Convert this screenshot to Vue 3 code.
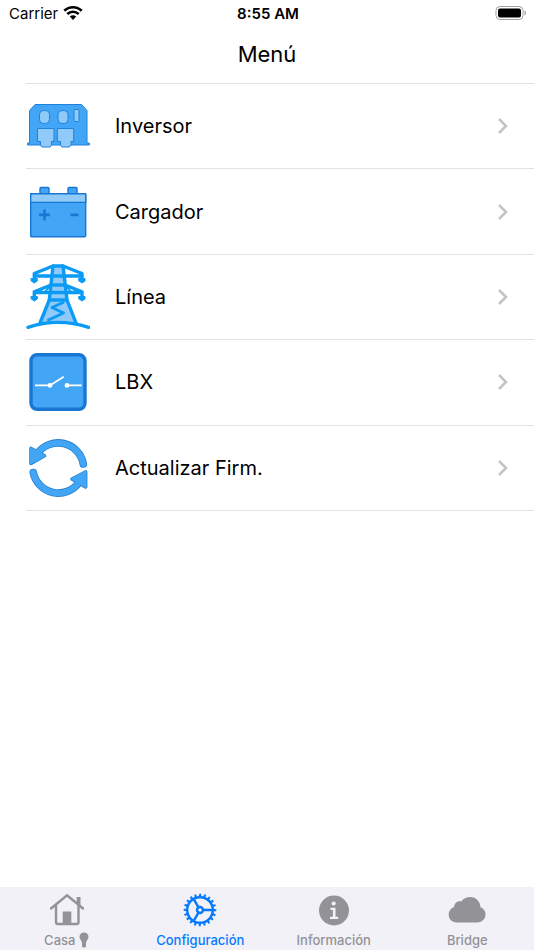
<template>
  <div class="screen">
    <header>
      <div class="status">
        <div class="carrier">
          <span>Carrier</span>
          <svg width="20" height="16" viewBox="0 0 20 16">
            <path d="M1.3 5.8C6.2 1 13.800 1 18.700 5.800" />
            <path d="M4.300 9C7.500 5.900 12.500 5.900 15.700 9" />
            <path class="dot" d="M6.800 11.600C8.600 9.900 11.400 9.900 13.200 11.600L10 14.900Z" />
          </svg>
        </div>
        <span class="time">8:55 AM</span>
        <svg class="battery" width="32" height="16" viewBox="0 0 32 16">
          <rect class="shell" x="1" y="1.500" width="27" height="13" rx="4" />
          <rect x="3" y="3.500" width="23" height="9" rx="2" />
          <path class="tip" d="M29.500 5.500C31.500 6 31.500 10 29.500 10.500Z" />
        </svg>
      </div>
      <h1>Menú</h1>
    </header>

    <main>
      <ul class="menu">
        <li v-for="item in items" :key="item.id">
          <a href="#">
            <svg v-if="item.id === 'inversor'" class="picture" viewBox="0 0 64 70">
              <g class="shape">
                <path d="M3.500 52V19.500L9 13.500H55.500L61 19.500V52H63.300V54H1.500V52Z" />
                <g class="light">
                  <rect x="13.500" y="19.500" width="10" height="13" rx="4" />
                  <rect x="32" y="19.500" width="10" height="13" rx="4" />
                  <rect x="48" y="18.500" width="5" height="12" rx="1" />
                  <path d="M11.500 37.500H28V50.500H25.500V54L24 56H16L14.500 54V50.500H11.500Z" />
                  <path d="M31.300 37.500H47.700V50.500H45V54L43.500 56H36L34.500 54V50.500H31.300Z" />
                </g>
              </g>
            </svg>
            <svg v-else-if="item.id === 'cargador'" class="picture" viewBox="0 0 64 70">
              <g class="shape thick">
                <path d="M14 17V11.500Q14 10.500 15 10.500H22Q23 10.500 23 11.500V17M42 17V11.500Q42 10.500 43 10.500H50Q51 10.500 51 11.500V17" />
                <rect x="4.700" y="16.700" width="55" height="43" rx="1" />
                <path class="light" d="M4.700 16.700H59.700V25.400H4.700Z" />
              </g>
              <path class="signs" d="M13 37.900H24M18.500 32.400V43.400M44.500 37.900H52.500" />
            </svg>
            <svg v-else-if="item.id === 'linea'" class="picture tower" viewBox="0 0 64 70">
              <path class="fill" d="M27 4H37L39 22L41 38L50 62Q32 58 14 62L23 38L25 22Z" />
              <path d="M27 4H37L56 11.500V17M27 4L8.300 11.500V17M8.300 14H56M25 23L8.300 29.800V36M39 23L56 29.800V36M8.300 30.500H56M25 23H39M23.300 38H41" />
              <path d="M27 4L23.300 38L14 61M37 4L41 38L50 61" />
              <path class="thin" d="M24.500 23L19 30M39.500 23L45 30" />
              <path class="bolt" d="M37 40.500L26 45.500L37.500 51L22.500 58" />
              <path class="ground" d="M2 65.300Q32 55.500 62.500 65.300" />
              <path class="drop" d="M5.300 16.500H11.300V19L8.300 21L5.300 19ZM53 16.500H59V19L56 21L53 19ZM5.300 34.500H11.300V37L8.300 39L5.300 37ZM53 34.500H59V37L56 39L53 37Z" />
            </svg>
            <svg v-else-if="item.id === 'lbx'" class="picture" viewBox="0 0 64 70">
              <rect class="box" x="5" y="7.700" width="54" height="54.600" rx="6" />
              <g class="switch">
                <path d="M9 38.400H24L37.700 29.700M41 38.400H55.700" />
                <circle cx="24" cy="38.400" r="1.500" />
                <circle cx="41" cy="38.400" r="1.500" />
              </g>
            </svg>
            <svg v-else class="picture" viewBox="0 0 64 70">
              <g v-for="layer in ['edge', 'core']" :key="layer" :class="['arrows', layer]">
                <path class="arc" d="M57.300 31A25.500 25.500 0 0 0 11.500 20.500M7.300 39.500A25.500 25.500 0 0 0 53 49.500" />
                <path class="head" d="M5 15.500V30.500L18.500 22.800ZM59.600 39V54L46 46Z" />
              </g>
            </svg>
            <span class="name">{{ item.label }}</span>
            <svg class="chevron" width="12" height="18" viewBox="0 0 12 18">
              <path d="M2 2L9 9L2 16" />
            </svg>
          </a>
        </li>
      </ul>
    </main>

    <nav>
      <a v-for="tab in tabs" :key="tab.id" href="#" :class="{ active: tab.id === 'config' }">
        <svg v-if="tab.id === 'casa'" width="34" height="34" viewBox="0 0 34 34">
          <g class="line">
            <path d="M1 15.500L17 2.300L33 15.500" />
            <path d="M6 12.500V29Q6 31 8 31H26.500Q28.500 31 28.500 29V12.500" />
          </g>
          <path d="M12.700 18.500H21.300V31H12.700ZM26.700 4H30.500V13.500L26.700 10Z" />
        </svg>
        <svg v-else-if="tab.id === 'config'" width="34" height="34" viewBox="0 0 34 34">
          <g class="line">
            <circle cx="17" cy="17" r="12.800" />
            <circle cx="17" cy="17" r="3" />
            <path d="M20 17H29.800M15.500 14.400L10.600 5.900M15.500 19.600L10.600 28.100" />
          </g>
          <path
            v-for="n in 20"
            :key="n"
            d="M15.700 4.500L16.300 .7H18.200L18.300 4.500Z"
            :transform="`rotate(${n * 18} 17 17)`"
          />
        </svg>
        <svg v-else-if="tab.id === 'info'" width="34" height="34" viewBox="0 0 34 34">
          <circle cx="17" cy="17.500" r="15" />
          <circle class="cut" cx="16.700" cy="10.500" r="2.100" />
          <path class="cut" d="M13.500 14.800H18.500V23.800H21.200V26H13V23.800H15.900V17H13.500Z" />
        </svg>
        <svg v-else width="38" height="34" viewBox="0 0 38 34">
          <path d="M8.500 29.500C3.800 29.500 .7 26 .7 21.800C.7 17.900 3 15 6.200 14C6 10 10 7.200 13.400 8.500C15.200 5.500 18.300 4 22 4C28 4 32.300 8.500 32.500 14.300C35.500 15.300 37.500 18 37.500 21.300C37.500 26 34 29.500 29.500 29.500Z" />
        </svg>
        <span class="caption">
          {{ tab.label }}
          <svg v-if="tab.id === 'casa'" width="10" height="16" viewBox="0 0 10 16">
            <path d="M5 .5C7.600 .5 9.500 2.400 9.500 4.800C9.500 7.300 7.300 8.300 7 11V14Q7 15.500 5 15.500Q3 15.500 3 14V11C2.700 8.300 .5 7.300 .5 4.800C.5 2.400 2.400 .5 5 .5Z" />
          </svg>
        </span>
      </a>
    </nav>
  </div>
</template>

<script setup>
const items = [
  { id: "inversor", label: "Inversor" },
  { id: "cargador", label: "Cargador" },
  { id: "linea", label: "Línea" },
  { id: "lbx", label: "LBX" },
  { id: "firmware", label: "Actualizar Firm." },
];

const tabs = [
  { id: "casa", label: "Casa" },
  { id: "config", label: "Configuración" },
  { id: "info", label: "Información" },
  { id: "bridge", label: "Bridge" },
];
</script>

<style>
body {
  margin: 0;
  background: #ffffff;
}
</style>

<style scoped>
.screen {
  min-height: 100vh;
  display: flex;
  flex-direction: column;
  font-family: Inter, "Liberation Sans", sans-serif;
  color: #000000;
}
a {
  color: inherit;
  text-decoration: none;
}
.status {
  display: grid;
  grid-template-columns: 1fr auto 1fr;
  align-items: center;
  height: 26px;
  padding: 0 7px 0 9px;
  font-size: 15px;
}
.carrier {
  display: flex;
  align-items: center;
  gap: 5px;
}
.carrier path {
  fill: none;
  stroke: #000000;
  stroke-width: 2.6;
}
.carrier .dot {
  fill: #000000;
  stroke: none;
}
.time {
  font-weight: 600;
}
.battery {
  justify-self: end;
}
.battery .shell {
  fill: none;
  stroke: #a0a0a0;
}
.battery .tip {
  fill: #a0a0a0;
}
h1 {
  margin: 0;
  height: 57px;
  line-height: 57px;
  font-size: 22px;
  font-weight: 400;
  text-align: center;
}
main {
  flex: 1;
}
.menu {
  display: grid;
  grid-template-rows: repeat(5, 1fr);
  height: 427px;
  margin: 0 0 0 26px;
  padding: 0;
  list-style: none;
  border-top: 1px solid #e2e2e4;
}
.menu a {
  box-sizing: border-box;
  height: 100%;
  display: flex;
  align-items: center;
  gap: 25px;
  padding-right: 25px;
  border-bottom: 1px solid #e2e2e4;
}
.picture {
  width: 64px;
  height: 70px;
}
.name {
  flex: 1;
  font-size: 20px;
}
.shape {
  fill: #42a5f5;
  stroke: #1e82dc;
  stroke-width: 1;
  stroke-linejoin: round;
}
.shape.thick {
  stroke: #1976d2;
  stroke-width: 1.4;
}
.shape .light {
  fill: #90caf9;
}
.signs {
  stroke: #1976d2;
  stroke-width: 2.6;
}
.tower {
  fill: none;
  stroke: #0b9bf5;
  stroke-width: 3.4;
  stroke-linejoin: round;
  stroke-linecap: round;
}
.tower .fill {
  fill: #90caf9;
  stroke: none;
}
.tower .thin {
  stroke-width: 2;
}
.tower .bolt {
  stroke-width: 3;
}
.tower .drop {
  fill: #0b9bf5;
  stroke-width: 1;
}
.box {
  fill: #42a5f5;
  stroke: #1976d2;
  stroke-width: 3.4;
}
.switch {
  fill: #ffffff;
  stroke: #ffffff;
  stroke-width: 1.8;
}
.switch path {
  fill: none;
}
.arrows {
  stroke: #2382d2;
  stroke-linejoin: round;
  stroke-linecap: round;
}
.arrows .arc {
  fill: none;
  stroke-width: 7.6;
}
.arrows .head {
  fill: #42a5f5;
  stroke-width: 3.6;
}
.arrows.core {
  stroke: #42a5f5;
}
.arrows.core .arc {
  stroke-width: 6;
}
.arrows.core .head {
  stroke-width: 2;
}
.chevron {
  fill: none;
  stroke: #c4c4c7;
  stroke-width: 2.6;
}
nav {
  display: grid;
  grid-template-columns: repeat(4, 1fr);
  height: 63px;
  background: #f2f1f7;
}
nav a {
  display: flex;
  flex-direction: column;
  align-items: center;
  padding-top: 6px;
  color: #929297;
  fill: currentColor;
  font-size: 13px;
  font-weight: 500;
}
nav a.active {
  color: #057aff;
}
.line {
  fill: none;
  stroke: currentColor;
  stroke-width: 2.4;
  stroke-linecap: round;
}
.cut {
  fill: #f2f1f7;
}
.caption {
  display: flex;
  align-items: center;
  gap: 4px;
  height: 16px;
  margin-top: 5px;
}
</style>
